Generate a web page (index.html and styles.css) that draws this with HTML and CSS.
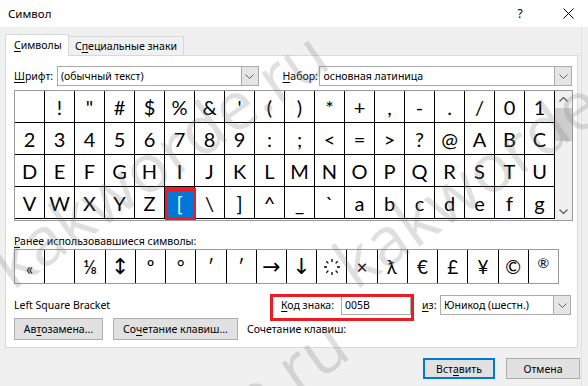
FILE: index.html
```html
<!DOCTYPE html>
<html lang="ru">
<head>
  <meta charset="UTF-8" />
  <meta name="viewport" content="width=device-width, initial-scale=1.0"/>
  <title>Символ</title>
  <link rel="stylesheet" href="styles.css">
</head>
<body>
  <div class="title-bar">
    <span class="title">Символ</span>
    <span class="title-btn help">?</span>
    <span class="title-btn close">
      <svg width="11" height="11" viewBox="0 0 11 11"><path d="M0.5 0.5L10.5 10.5M10.5 0.5L0.5 10.5" stroke="#000" stroke-width="1" fill="none"/></svg>
    </span>
  </div>

  <div class="dialog">
    <div class="tabs">
      <div class="tab active"><u>С</u>имволы</div>
      <div class="tab">С<u>п</u>ециальные знаки</div>
    </div>

    <div class="panel">
      <div class="row font-row">
        <span class="lbl w-font"><u>Ш</u>рифт:</span>
        <div class="combo w-fontbox">
          <span class="combo-text">(обычный текст)</span>
          <span class="combo-btn"><svg width="9" height="5" viewBox="0 0 9 5"><path d="M0.5 0.5L4.5 4.5L8.5 0.5" stroke="#606060" fill="none"/></svg></span>
        </div>
        <span class="lbl w-set"><u>Н</u>абор:</span>
        <div class="combo w-setbox">
          <span class="combo-text">основная латиница</span>
          <span class="combo-btn"><svg width="9" height="5" viewBox="0 0 9 5"><path d="M0.5 0.5L4.5 4.5L8.5 0.5" stroke="#606060" fill="none"/></svg></span>
        </div>
      </div>

      <div class="charmap">
        <div class="chars" id="chars"></div>
        <div class="scrollbar">
          <span class="sb-arrow"><svg width="9" height="5" viewBox="0 0 9 5"><path d="M0.5 4.5L4.5 0.5L8.5 4.5" stroke="#606060" stroke-width="1.3" fill="none"/></svg></span>
          <span class="sb-thumb"></span>
          <span class="sb-track"></span>
          <span class="sb-arrow"><svg width="9" height="5" viewBox="0 0 9 5"><path d="M0.5 0.5L4.5 4.5L8.5 0.5" stroke="#606060" stroke-width="1.3" fill="none"/></svg></span>
        </div>
      </div>

      <div class="recent-label"><u>Р</u>анее использовавшиеся символы:</div>
      <div class="recent">
        <span class="sym low">«</span>
        <span class="sym"></span>
        <span class="sym">⅛</span>
        <span class="sym arrow">↕</span>
        <span class="sym">º</span>
        <span class="sym">°</span>
        <span class="sym">′</span>
        <span class="sym">ʹ</span>
        <span class="sym arrow">→</span>
        <span class="sym arrow">↓</span>
        <span class="sym">
          <svg width="18" height="18" viewBox="0 0 18 18">
            <path d="M9 1v3M9 14v3M1 9h3M14 9h3M3.3 3.3l2.1 2.1M12.6 12.6l2.1 2.1M14.7 3.3l-2.1 2.1M5.4 12.6l-2.1 2.1" stroke="#000" stroke-width="1.3" fill="none"/>
          </svg>
        </span>
        <span class="sym">×</span>
        <span class="sym">ƛ</span>
        <span class="sym">€</span>
        <span class="sym">£</span>
        <span class="sym">¥</span>
        <span class="sym">©</span>
        <span class="sym small">®</span>
      </div>

      <div class="row info-row">
        <span class="char-name">Left Square Bracket</span>
        <div class="code-field">
          <span class="lbl w-code"><u>К</u>од знака:</span>
          <span class="input">005B</span>
        </div>
        <span class="lbl w-from"><u>и</u>з:</span>
        <div class="combo w-frombox">
          <span class="combo-text">Юникод (шестн.)</span>
          <span class="combo-btn"><svg width="9" height="5" viewBox="0 0 9 5"><path d="M0.5 0.5L4.5 4.5L8.5 0.5" stroke="#606060" fill="none"/></svg></span>
        </div>
      </div>

      <div class="row btn-row">
        <span class="btn w-auto">Ав<u>т</u>озамена...</span>
        <span class="btn w-keys">Со<u>ч</u>етание клавиш...</span>
        <span class="keys-label">Сочетание клавиш:</span>
      </div>
    </div>

    <div class="actions">
      <span class="btn default w-insert">Вст<u>а</u>вить</span>
      <span class="btn w-cancel">Отмена</span>
    </div>
  </div>

  <div class="watermarks">
    <span class="wm wm-1">kakworde.ru</span>
    <span class="wm wm-2">kakworde.ru</span>
    <span class="wm wm-3">kakworde.ru</span>
  </div>

  <script>
    // fill the table with U+0020 .. U+0067
    const chars = document.getElementById('chars');
    for (let code = 0x20; code <= 0x67; code++) {
      const cell = document.createElement('span');
      cell.className = 'cell';
      if (code === 0x5B) cell.classList.add('selected');
      cell.textContent = String.fromCharCode(code);
      chars.appendChild(cell);
    }
  </script>
</body>
</html>
```

FILE: styles.css
```css
* {
  box-sizing: border-box;
}

body {
  margin: 0;
  width: 588px;
  height: 386px;
  overflow: hidden;
  position: relative;
  background: #f0f0f0;
  font-family: "Noto Sans", sans-serif;
  font-size: 10.5px;
  color: #000;
}

u {
  text-decoration-thickness: 1px;
  text-underline-offset: 2px;
}

/* title bar */
.title-bar {
  height: 27px;
  background: #fff;
  display: flex;
  align-items: center;
  padding: 0 10px 0 8px;
}

.title {
  font-size: 11.5px;
}

.title-btn {
  width: 20px;
  display: flex;
  justify-content: center;
  font-size: 12px;
}

.help {
  margin-left: auto;
  margin-right: 28px;
}

/* dialog body */
.dialog {
  width: 582px;
  height: 359px;
  border-right: 1px solid #cfe3f6;
  padding-top: 7px;
}

.tabs {
  display: flex;
  align-items: flex-end;
  margin-left: 5px;
}

.tab {
  height: 19px;
  padding-left: 6px;
  width: 115px;
  line-height: 18px;
  background: #f0f0f0;
  border: 1px solid #d9d9d9;
  border-left: none;
  border-bottom: none;
}

.tab.active {
  position: relative;
  z-index: 1;
  width: 64px;
  height: 22px;
  margin-bottom: -1px;
  padding-left: 8px;
  line-height: 20px;
  background: #fff;
  border-left: 1px solid #d9d9d9;
}

.panel {
  height: 293px;
  margin: 0 3px 0 5px;
  padding: 10px 5px 7px 8px;
  background: #fff;
  border: 1px solid #d9d9d9;
}

.row {
  display: flex;
  align-items: center;
}

.font-row,
.info-row {
  height: 20px;
}

.lbl {
  white-space: nowrap;
}

.w-font { width: 43px; }
.w-set { width: 37px; margin-left: 24px; }
.w-code { width: 60px; }
.w-from { width: 18px; margin-left: 11px; }

.combo {
  height: 20px;
  display: flex;
  align-items: center;
  border: 1px solid #ababab;
  background: #fff;
}

.w-fontbox { width: 202px; }
.w-setbox { width: 253px; }
.w-frombox { width: 131px; }

.combo-text {
  flex: 1;
  padding-left: 3px;
  white-space: nowrap;
}

.combo-btn {
  width: 17px;
  height: 100%;
  display: flex;
  align-items: center;
  justify-content: center;
  background: #e5e5e5;
  border-left: 1px solid #ababab;
}

/* character table */
.charmap {
  display: flex;
  width: 559px;
  margin-top: 4px;
  border: 1px solid #9a9a9a;
}

.chars {
  display: grid;
  grid-template-columns: repeat(18, 30px);
  grid-auto-rows: 32px;
  padding-bottom: 1px;
}

.cell,
.sym {
  display: flex;
  align-items: center;
  justify-content: center;
  font-family: "Lato", "DejaVu Sans", sans-serif;
  font-size: 20px;
}

.cell {
  border-right: 1px solid #000;
  border-bottom: 1px solid #000;
}

.cell.selected {
  position: relative;
  background: #0078d7;
  color: #fff;
}

.cell.selected::after {
  content: "";
  position: absolute;
  left: 0;
  top: 1px;
  right: -2px;
  bottom: -2px;
  border: 3px solid #ed1c24;
}

.scrollbar {
  width: 17px;
  display: flex;
  flex-direction: column;
  background: #f0f0f0;
}

.sb-arrow {
  height: 17px;
  display: flex;
  align-items: center;
  justify-content: center;
}

.sb-thumb {
  height: 33px;
  background: #cdcdcd;
}

.sb-track {
  flex: 1;
}

/* recently used */
.recent-label {
  margin-top: 12px;
  height: 16px;
  line-height: 16px;
}

.recent {
  display: flex;
  width: 545px;
  height: 35px;
  border: 1px solid #9a9a9a;
}

.sym {
  flex: 1;
  font-size: 19px;
  border-right: 1px solid #000;
}

.sym:last-child {
  border-right: none;
}

.sym.low {
  padding-top: 4px;
  font-size: 17px;
}

.sym.arrow {
  font-family: "DejaVu Sans", sans-serif;
  font-size: 22px;
}

.sym.small {
  font-size: 14px;
  padding-bottom: 8px;
}

/* code row */
.info-row {
  margin-top: 11px;
}

.char-name {
  width: 267px;
}

.code-field {
  position: relative;
  display: flex;
  align-items: center;
}

.code-field::before {
  content: "";
  position: absolute;
  left: -11px;
  top: -1px;
  right: -3px;
  bottom: -6px;
  border: 3px solid #ed1c24;
  z-index: 1;
}

.input {
  width: 70px;
  height: 20px;
  line-height: 18px;
  padding-left: 3px;
  border: 1px solid #ababab;
}

/* buttons */
.btn-row {
  margin-top: 3px;
  height: 22px;
}

.btn {
  height: 22px;
  display: flex;
  align-items: center;
  justify-content: center;
  background: #e1e1e1;
  border: 1px solid #adadad;
  white-space: nowrap;
}

.w-auto { width: 89px; }
.w-keys { width: 125px; margin-left: 10px; }

.keys-label {
  margin-left: 9px;
}

.actions {
  display: flex;
  justify-content: flex-end;
  gap: 11px;
  margin-top: 10px;
  padding-right: 1px;
}

.actions .btn {
  height: 21px;
}

.btn.default {
  border: 2px solid #0078d7;
}

.w-insert { width: 72px; }
.w-cancel { width: 74px; }

/* watermark overlay */
.watermarks {
  position: absolute;
  inset: 0;
  overflow: hidden;
  pointer-events: none;
}

.wm {
  position: absolute;
  font-family: "Open Sans", sans-serif;
  font-size: 67px;
  line-height: 67px;
  white-space: nowrap;
  color: rgba(120, 120, 120, 0.24);
  transform-origin: 0 60px;
  transform: rotate(-35deg);
}

.wm-1 { left: 13px; top: 232px; }
.wm-2 { left: 356px; top: 232px; }
.wm-3 { left: 33px; top: 522px; }
```
